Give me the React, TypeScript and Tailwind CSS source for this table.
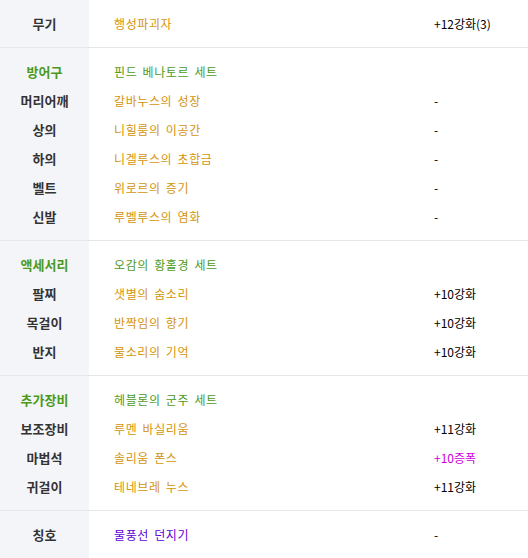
const GREEN = "text-[#4c9a1c]";
const GOLD = "text-[#d4940c]";

type Row = {
  label: string;
  item: string;
  value: string;
  labelClass?: string;
  itemClass?: string;
  valueClass?: string;
};

const sections: Row[][] = [
  [{ label: "무기", item: "행성파괴자", value: "+12강화(3)" }],
  [
    { label: "방어구", item: "핀드 베나토르 세트", value: "", labelClass: GREEN, itemClass: GREEN },
    { label: "머리어깨", item: "갈바누스의 성장", value: "-" },
    { label: "상의", item: "니힐룸의 이공간", value: "-" },
    { label: "하의", item: "니겔루스의 초합금", value: "-" },
    { label: "벨트", item: "위로르의 증기", value: "-" },
    { label: "신발", item: "루벨루스의 염화", value: "-" },
  ],
  [
    { label: "액세서리", item: "오감의 황홀경 세트", value: "", labelClass: GREEN, itemClass: GREEN },
    { label: "팔찌", item: "샛별의 숨소리", value: "+10강화" },
    { label: "목걸이", item: "반짝임의 향기", value: "+10강화" },
    { label: "반지", item: "물소리의 기억", value: "+10강화" },
  ],
  [
    { label: "추가장비", item: "헤블론의 군주 세트", value: "", labelClass: GREEN, itemClass: GREEN },
    { label: "보조장비", item: "루멘 바실리움", value: "+11강화" },
    { label: "마법석", item: "솔리움 폰스", value: "+10증폭", valueClass: "text-[#cc00dd]" },
    { label: "귀걸이", item: "테네브레 누스", value: "+11강화" },
  ],
  [{ label: "칭호", item: "물풍선 던지기", value: "-", itemClass: "text-[#5a00d8]" }],
];

function EquipRow({ row }: { row: Row }) {
  return (
    <div className="grid h-[29px] grid-cols-[89px_345px_1fr] items-center">
      <div className={`text-center text-[13px] font-bold ${row.labelClass ?? "text-[#333333]"}`}>{row.label}</div>
      <div className={`pl-[25px] text-[12px] tracking-[0.6px] [word-spacing:2px] ${row.itemClass ?? GOLD}`}>
        {row.item}
      </div>
      <div className={`text-[12px] ${row.valueClass ?? "text-black"}`}>{row.value}</div>
    </div>
  );
}

export default function App() {
  return (
    <div
      className="relative h-[558px] w-[528px] overflow-hidden bg-white leading-none"
      style={{ fontFamily: '"Noto Sans CJK KR", "Noto Sans", sans-serif' }}
    >
      <div className="absolute inset-y-0 left-0 w-[89px] bg-[#f4f5f9]" />
      <div className="relative">
        {sections.map((rows, i) => (
          <div key={i} className={i > 0 ? "border-t border-[#e6e6e9] py-[9px]" : "py-[9px]"}>
            {rows.map((row) => (
              <EquipRow key={row.label} row={row} />
            ))}
          </div>
        ))}
      </div>
    </div>
  );
}
